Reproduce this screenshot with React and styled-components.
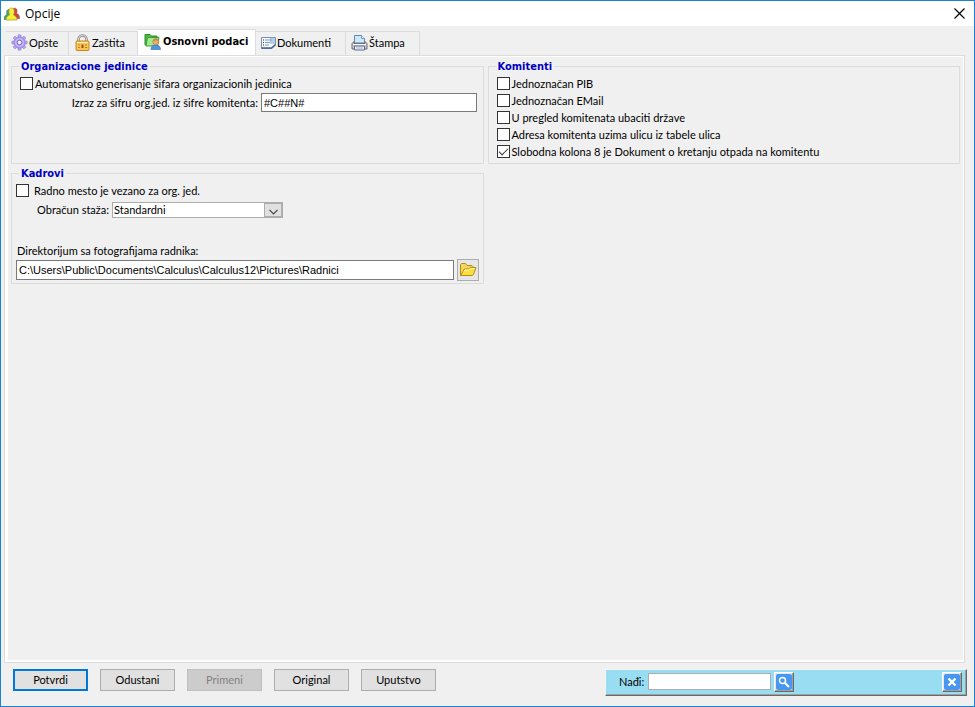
import React, { useState } from 'react';
import styled, { createGlobalStyle, css } from 'styled-components';

const uiFont = 'Lato, "Noto Sans", sans-serif';
const inputFont = '"Liberation Sans", Arial, sans-serif';
const boldFont = '"DejaVu Sans Condensed", "DejaVu Sans", sans-serif';
const titleFont = '"Open Sans", "Noto Sans", sans-serif';

const color = {
  face: '#f0f0f0',
  line: '#dcdcdc',
  accent: '#0078d7',
  frame: '#1883d7',
  legend: '#0000c0',
  find: '#99ddf3',
};

const GlobalStyle = createGlobalStyle`
  *, *::before, *::after { box-sizing: border-box; }
  body { margin: 0; background: ${color.face}; }
  button, input, select { font: inherit; color: inherit; margin: 0; }
`;

const Window = styled.div`
  min-height: 100vh;
  display: flex;
  flex-direction: column;
  border: 1px solid ${color.frame};
  background: ${color.face};
  color: #000;
  font: 11px/16px ${uiFont};
`;

const TitleBar = styled.header`
  display: flex;
  align-items: center;
  gap: 5px;
  height: 25px;
  padding: 0 9px 0 3px;
  background: #fff;
`;

const Title = styled.h1`
  flex: 1;
  margin: 0;
  font: 12px/16px ${titleFont};
`;

const CloseButton = styled.button`
  display: flex;
  padding: 0;
  border: 0;
  background: none;
`;

const TabStrip = styled.div`
  display: flex;
  align-items: flex-end;
  height: 29px;
  padding-left: 5px;
`;

const Tab = styled.button`
  display: flex;
  align-items: center;
  gap: 1px;
  width: ${(p) => p.$width}px;
  height: 24px;
  padding: 0 0 2px 5px;
  border: 1px solid ${color.line};
  border-width: 1px 1px 0 0;
  background: ${color.face};
  white-space: nowrap;
  ${(p) =>
    p.$active &&
    css`
      height: 27px;
      padding: 0 0 3px 6px;
      margin-bottom: -1px;
      background: #fff;
      font: bold 11px/16px ${boldFont};
      gap: 2px;
    `}
`;

const Page = styled.main`
  flex: 1;
  margin: 0 9px 0 3px;
  padding: 3px 4px 2px 6px;
  border: 1px solid ${color.line};
  box-shadow: inset 3px 0 #fff, inset -1px 0 #fff, inset 0 1px #fff, inset 0 -2px #fff;
`;

const Columns = styled.div`
  display: grid;
  grid-template-columns: 1fr 1fr;
  gap: 4px;
  align-items: start;
`;

const Column = styled.div`
  display: flex;
  flex-direction: column;
  gap: 2px;
`;

const Group = styled.fieldset`
  min-width: 0;
  min-height: ${(p) => p.$height}px;
  margin: 0;
  padding: 2px ${(p) => p.$end || 6}px 0 ${(p) => p.$indent}px;
  border: 1px solid ${color.line};
`;

const Legend = styled.legend`
  margin-left: ${(p) => p.$shift}px;
  padding: 2px 2px 0;
  color: ${color.legend};
  font: bold 11px/12px ${boldFont};
`;

const CheckLabel = styled.label`
  display: flex;
  align-items: center;
  gap: ${(p) => p.$gap || 2}px;
  height: 17px;
  white-space: nowrap;
`;

const CheckBox = styled.input.attrs({ type: 'checkbox' })`
  appearance: none;
  display: grid;
  flex: none;
  width: 13px;
  height: 13px;
  border: 1px solid #333;
  background: #fff;
  &:checked::before {
    content: '';
    width: 9px;
    height: 5px;
    margin: 2px 0 0 1px;
    border: solid #333;
    border-width: 0 0 1px 1px;
    transform: rotate(-45deg);
  }
`;

const Row = styled.div`
  display: flex;
  align-items: center;
  gap: 3px;
  margin-top: ${(p) => p.$top || 0}px;
`;

const FieldLabel = styled.label`
  flex: none;
  width: ${(p) => p.$width}px;
  text-align: right;
  white-space: nowrap;
`;

const BlockLabel = styled.label`
  display: block;
  margin: 25px 0 0 1px;
`;

const TextInput = styled.input.attrs({ type: 'text' })`
  flex: 1;
  min-width: 0;
  height: ${(p) => p.$height}px;
  padding: 0 2px;
  border: 1px solid #7a7a7a;
  border-radius: 0;
  background: #fff;
  font-family: ${inputFont};
`;

const SelectBox = styled.div`
  display: grid;
  grid-template-columns: 1fr 18px;
  width: 171px;
  height: 16px;
  border: 1px solid #adadad;
  background: #fff;
`;

const Select = styled.select`
  grid-area: 1 / 1 / 2 / 3;
  appearance: none;
  min-width: 0;
  padding: 0 0 0 1px;
  border: 0;
  background: none;
  line-height: 14px;
`;

const SelectArrow = styled.span`
  grid-area: 1 / 2 / 2 / 3;
  display: grid;
  place-items: end center;
  padding-bottom: 1px;
  border: 1px solid #adadad;
  background: #e1e1e1;
  pointer-events: none;
`;

const IconButton = styled.button`
  display: grid;
  place-items: center;
  width: 22px;
  height: 22px;
  padding: 0;
  border: 1px solid #adadad;
  background: #e6e6e6;
`;

const Footer = styled.footer`
  display: flex;
  align-items: flex-start;
  justify-content: space-between;
  gap: 12px;
  padding: 6px 7px 10px 12px;
`;

const ButtonRow = styled.div`
  display: flex;
  gap: 12px;
`;

const PushButton = styled.button`
  width: 75px;
  height: 22px;
  padding: 0;
  border: ${(p) => (p.$primary ? `2px solid ${color.accent}` : '1px solid #adadad')};
  background: #e1e1e1;
  &:disabled {
    border-color: #bfbfbf;
    background: #ccc;
    color: #838383;
  }
`;

const FindBar = styled.form`
  display: flex;
  align-items: center;
  width: 362px;
  height: 27px;
  padding: 0 4px 2px 13px;
  border: 1px solid;
  border-color: #f4f4f4 #696969 #696969 #f4f4f4;
  box-shadow: inset -1px -1px #a0a0a0;
  background: ${color.find};
`;

const FindInput = styled.input.attrs({ type: 'text' })`
  width: 123px;
  height: 17px;
  margin: 0 3px 0 4px;
  padding: 0 2px;
  border: 1px solid #abadb3;
  background: #fff;
`;

const FindButton = styled.button`
  display: grid;
  place-items: center;
  width: 20px;
  height: 20px;
  padding: 0;
  border: 1px solid;
  border-color: #fff #696969 #696969 #fff;
  box-shadow: inset -1px -1px #a0a0a0;
  background: #e8e8e8;
  margin-left: ${(p) => (p.$end ? 'auto' : 0)};
`;

const PeopleIcon = () => (
  <svg width="16" height="16" viewBox="0 0 16 16">
    <path d="M0 13.500C0 10 1.500 9 3 8.500 2 5 3 3.500 5 3.500s3 2 2 5c1 1 1.500 3 1.500 5z" fill="#3aa877" stroke="#56776a" strokeWidth=".6" />
    <path d="M8 12.500V8l1-5c1-1.500 4-1 4 1.500 0 1.500-.5 2.500-.5 3 2 .5 3 2 3 5z" fill="#d8403f" stroke="#8f4a4a" strokeWidth=".6" />
    <path d="M2 14c0-3 1.500-4 3.500-5C4.500 6 4.500 2 7.500 2s3.500 4 2 7c2 1 3.500 2 3.500 5z" fill="#f4ee36" stroke="#a59a2c" strokeWidth=".7" />
  </svg>
);

const CloseIcon = () => (
  <svg width="11" height="11" viewBox="0 0 11 11">
    <path d="M.5.5l10 10M10.500.5l-10 10" stroke="#000" strokeWidth="1.200" />
  </svg>
);

const GearIcon = () => (
  <svg width="17" height="17" viewBox="0 0 17 17">
    <g fill="#b9a8f4" stroke="#8374c9" strokeWidth=".6">
      {[0, 45, 90, 135, 180, 225, 270, 315].map((a) => (
        <rect key={a} x="7" y=".8" width="3" height="4" rx="1" transform={`rotate(${a} 8.500 8.500)`} />
      ))}
    </g>
    <circle cx="8.500" cy="8.500" r="5.500" fill="#b3a2f2" stroke="#9482dd" strokeWidth=".8" />
    <circle cx="8.500" cy="8.500" r="3.800" fill="none" stroke="#cdc1fb" />
    <circle cx="8.500" cy="8.500" r="2.300" fill="#f2f0fb" stroke="#7563bd" strokeWidth=".9" />
  </svg>
);

const LockIcon = () => (
  <svg width="17" height="17" viewBox="0 0 17 17">
    <path d="M4.500 8V5.500a4 4 0 0 1 8 0V8" fill="none" stroke="#858585" strokeWidth="2.600" />
    <path d="M4.500 8V5.500a4 4 0 0 1 8 0V8" fill="none" stroke="#d6d6d6" strokeWidth="1.200" />
    <rect x="2" y="7" width="13" height="9.500" rx="1" fill="#f9c455" stroke="#c8862a" />
    <path d="M3 8.500h11" stroke="#fff0b4" />
    <path d="M4 11h2M4 13.500h2M11 11h2M11 13.500h2" stroke="#c67e1f" />
    <path d="M8.500 10.500v3.500" stroke="#965713" strokeWidth="2" />
  </svg>
);

const FolderUserIcon = () => (
  <svg width="17" height="17" viewBox="0 0 17 17">
    <path d="M1 12V1.500h5L7.500 3H13v9z" fill="#4fb846" stroke="#2c8d2c" />
    <path d="M3.500 4.500H15L13.500 13H2z" fill="#a4e98c" stroke="#36a035" />
    <path d="M7 16.500c0-3.500 2-4.500 4.500-4.500s5 1 5 4.500z" fill="#5195df" stroke="#336eb3" strokeWidth=".6" />
    <circle cx="11.800" cy="8.800" r="3" fill="#eeaf6a" stroke="#b27637" strokeWidth=".6" />
    <path d="M9 8.500c-.3-4 6-4 5.700 0-1.500-1.500-4-1.500-5.700 0z" fill="#c98a48" />
  </svg>
);

const DocumentIcon = () => (
  <svg width="15" height="16" viewBox="0 0 15 16">
    <path d="M.5 2.500h14V10L11 13.500H.5z" fill="#f6f9fd" stroke="#7b91b0" />
    <path d="M9 3h5v6H9z" fill="#b6cdec" />
    <path d="M2 5h1M2 7.500h1M2 10h1" stroke="#333" />
    <path d="M4 5h7M4 7.500h5M4 10h4" stroke="#7d9bc4" />
    <path d="M.5 13h10l4-3.500" fill="none" stroke="#48648e" strokeWidth="1.500" />
  </svg>
);

const PrinterIcon = () => (
  <svg width="17" height="17" viewBox="0 0 17 17">
    <path d="M3.500 9V1.500h7l3 3V9z" fill="#cfe8fc" stroke="#5e88ae" />
    <path d="M10.500 1.500v3h3" fill="#fff" stroke="#5e88ae" strokeWidth=".8" />
    <path d="M1 9.500L3 7.500v2h11v-2l2 2V15H1z" fill="#c7cad2" stroke="#6c6f7a" />
    <path d="M2 10.500h13" stroke="#fff" />
    <path d="M3.500 12h10v4h-10z" fill="#eef4fb" stroke="#636978" />
    <path d="M5 14h7" stroke="#8fb9e2" />
  </svg>
);

const FolderIcon = () => (
  <svg width="18" height="16" viewBox="0 0 18 16">
    <path d="M1.500 13.500v-11l1-1h4l1.500 2h5l1 1v2" fill="#f6d55b" stroke="#b08d1e" />
    <path d="M1.500 13.500l4-6.500h4l1.500-1.500h6l-2.500 7-1.500 1z" fill="#fbe03c" stroke="#b08d1e" />
    <path d="M5 9.500l1-1.500h4l1.500-1.500h4" fill="none" stroke="#fff6b8" />
  </svg>
);

const ChevronIcon = () => (
  <svg width="9" height="6" viewBox="0 0 9 6">
    <path d="M.5.8l4 4 4-4" fill="none" stroke="#444" strokeWidth="1.200" />
  </svg>
);

const SearchIcon = () => (
  <svg width="16" height="16" viewBox="0 0 16 16">
    <rect width="16" height="16" rx="2" fill="#4797f0" />
    <circle cx="6.500" cy="6.500" r="3" fill="none" stroke="#fff" strokeWidth="1.500" />
    <path d="M9 9l4 4" stroke="#fff" strokeWidth="2" />
  </svg>
);

const DismissIcon = () => (
  <svg width="16" height="16" viewBox="0 0 16 16">
    <rect width="16" height="16" rx="2" fill="#4797f0" />
    <path d="M4.500 4.500l7 7M11.500 4.500l-7 7" stroke="#fff" strokeWidth="2.400" />
  </svg>
);

const tabs = [
  { name: 'Opšte', icon: GearIcon, width: 63 },
  { name: 'Zaštita', icon: LockIcon, width: 69 },
  { name: 'Osnovni podaci', icon: FolderUserIcon, width: 118 },
  { name: 'Dokumenti', icon: DocumentIcon, width: 90 },
  { name: 'Štampa', icon: PrinterIcon, width: 74 },
];

const partnerOptions = [
  { text: 'Jednoznačan PIB' },
  { text: 'Jednoznačan EMail' },
  { text: 'U pregled komitenata ubaciti države' },
  { text: 'Adresa komitenta uzima ulicu iz tabele ulica' },
  { text: 'Slobodna kolona 8 je Dokument o kretanju otpada na komitentu', checked: true },
];

function Check({ text, checked, gap }) {
  return (
    <CheckLabel $gap={gap}>
      <CheckBox defaultChecked={checked} />
      {text}
    </CheckLabel>
  );
}

export default function App() {
  const [active, setActive] = useState('Osnovni podaci');
  return (
    <>
      <GlobalStyle />
      <Window>
        <TitleBar>
          <PeopleIcon />
          <Title>Opcije</Title>
          <CloseButton aria-label="Zatvori"><CloseIcon /></CloseButton>
        </TitleBar>
        <TabStrip role="tablist">
          {tabs.map(({ name, icon: Icon, width }) => (
            <Tab
              key={name}
              role="tab"
              aria-selected={name === active}
              $active={name === active}
              $width={width}
              onClick={() => setActive(name)}
            >
              <Icon />
              {name}
            </Tab>
          ))}
        </TabStrip>
        <Page>
          <Columns>
            <Column>
              <Group $height={105} $indent={8}>
                <Legend $shift={-1}>Organizacione jedinice</Legend>
                <Check text="Automatsko generisanje šifara organizacionih jedinica" />
                <Row $top={1}>
                  <FieldLabel htmlFor="expr" $width={238}>Izraz za šifru org.jed. iz šifre komitenta:</FieldLabel>
                  <TextInput id="expr" $height={19} defaultValue="#C##N#" />
                </Row>
              </Group>
              <Group $height={118} $indent={4} $end={4}>
                <Legend $shift={3}>Kadrovi</Legend>
                <Check gap={5} text="Radno mesto je vezano za org. jed." />
                <Row $top={3}>
                  <FieldLabel htmlFor="staz" $width={93}>Obračun staža:</FieldLabel>
                  <SelectBox>
                    <Select id="staz" defaultValue="Standardni">
                      <option>Standardni</option>
                    </Select>
                    <SelectArrow><ChevronIcon /></SelectArrow>
                  </SelectBox>
                </Row>
                <BlockLabel htmlFor="dir">Direktorijum sa fotografijama radnika:</BlockLabel>
                <Row>
                  <TextInput
                    id="dir"
                    $height={20}
                    defaultValue="C:\Users\Public\Documents\Calculus\Calculus12\Pictures\Radnici"
                  />
                  <IconButton aria-label="Izaberi direktorijum"><FolderIcon /></IconButton>
                </Row>
              </Group>
            </Column>
            <Column>
              <Group $height={105} $indent={8}>
                <Legend $shift={-1}>Komitenti</Legend>
                {partnerOptions.map((o) => (
                  <Check key={o.text} {...o} />
                ))}
              </Group>
            </Column>
          </Columns>
        </Page>
        <Footer>
          <ButtonRow>
            <PushButton $primary>Potvrdi</PushButton>
            <PushButton>Odustani</PushButton>
            <PushButton disabled>Primeni</PushButton>
            <PushButton>Original</PushButton>
            <PushButton>Uputstvo</PushButton>
          </ButtonRow>
          <FindBar onSubmit={(e) => e.preventDefault()}>
            <label htmlFor="find">Nađi:</label>
            <FindInput id="find" />
            <FindButton aria-label="Traži"><SearchIcon /></FindButton>
            <FindButton type="button" aria-label="Sakrij pretragu" $end><DismissIcon /></FindButton>
          </FindBar>
        </Footer>
      </Window>
    </>
  );
}
